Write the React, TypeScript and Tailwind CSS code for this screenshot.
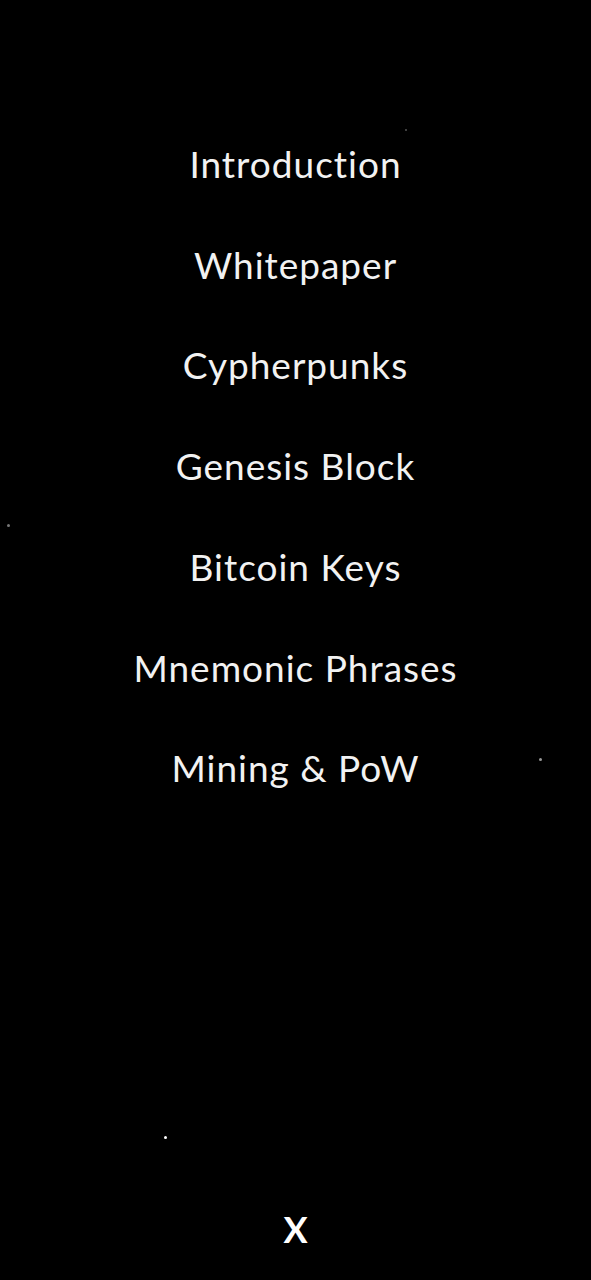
import React from "react";

const items = [
  "Introduction",
  "Whitepaper",
  "Cypherpunks",
  "Genesis Block",
  "Bitcoin Keys",
  "Mnemonic Phrases",
  "Mining & PoW",
];

export default function App() {
  return (
    <div
      className="relative flex h-[1280px] w-full flex-col items-center bg-black text-white"
      style={{ fontFamily: "Lato, 'Open Sans', sans-serif" }}
    >
      <span className="absolute left-[405px] top-[129px] h-[2px] w-[2px] rounded-full bg-[#555]" />
      <span className="absolute left-[7px] top-[524px] h-[3px] w-[3px] rounded-full bg-[#777]" />
      <span className="absolute left-[539px] top-[758px] h-[3px] w-[3px] rounded-full bg-[#999]" />
      <span className="absolute left-[164px] top-[1136px] h-[3px] w-[3px] rounded-full bg-white" />

      <nav className="flex flex-col items-center pt-[114px]">
        {items.map((t) => (
          <a
            key={t}
            className="block text-[37px] leading-[100.7px] tracking-[1px] text-[#f2f2f2]"
          >
            {t}
          </a>
        ))}
      </nav>
      <div className="flex-1" />
      <button className="mb-[33px] text-[36px] font-bold leading-none text-white">
        X
      </button>
    </div>
  );
}
